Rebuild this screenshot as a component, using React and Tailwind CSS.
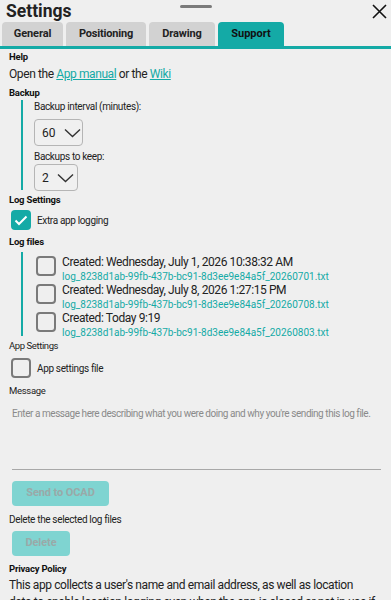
import React from "react";

function Select({ value, w }) {
  return (
    <div className={`flex items-center gap-[8px] h-[27px] ${w} border border-[#b5b5b5] rounded-[4px] pl-[7px] bg-[#f0f0f0]`}>
      <span className="text-[12px] text-[#222]">{value}</span>
      <svg width="17" height="10" viewBox="0 0 17 10" fill="none" stroke="#333" strokeWidth="1.4">
        <path d="M1 1.5 L8.5 8.5 L16 1.5" />
      </svg>
    </div>
  );
}

function Box({ checked }) {
  return checked ? (
    <div className="w-[20px] h-[20px] rounded-[4px] bg-[#14aaa6] flex items-center justify-center shrink-0">
      <svg width="14" height="11" viewBox="0 0 14 11" fill="none" stroke="white" strokeWidth="2">
        <path d="M1.5 5.5 L5 9 L12.5 1.5" />
      </svg>
    </div>
  ) : (
    <div className="w-[20px] h-[20px] rounded-[4px] border-2 border-[#7a7a7a] shrink-0" />
  );
}

function LogItem({ created, file }) {
  return (
    <div className="flex items-start gap-[6px] h-[28px]">
      <div className="pt-[1px]"><Box /></div>
      <div className="flex flex-col">
        <span className="text-[12px] leading-[15px] tracking-[-0.4px] text-[#222] whitespace-nowrap">{created}</span>
        <span className="text-[10px] leading-[13px] text-[#14aaa6] whitespace-nowrap">{file}</span>
      </div>
    </div>
  );
}

const label = "text-[9.5px] font-bold leading-[12px] tracking-[-0.2px] text-[#111]";
const small = "text-[10px] tracking-[-0.35px] text-[#222]";

export default function App() {
  return (
    <div className="w-[391px] h-[600px] overflow-hidden bg-[#efefef] text-[#1a1a1a]" style={{ fontFamily: "Roboto, 'Noto Sans', sans-serif" }}>
      <div className="relative h-[22px]">
        <div className="absolute left-[6px] top-[0px] text-[17.5px] font-bold leading-[22px] text-[#222]">Settings</div>
        <div className="absolute left-[180px] top-[5px] w-[32px] h-[3px] rounded-full bg-[#7a7a7a]" />
        <svg className="absolute right-[4px] top-[4px]" width="15" height="15" viewBox="0 0 15 15" stroke="#111" strokeWidth="1.6">
          <path d="M1 1 L14 14 M14 1 L1 14" />
        </svg>
      </div>
      <div className="flex items-end gap-[3px] pl-[2px] h-[24px] border-b-[3px] border-[#14aaa6] box-content">
        <div className="w-[61px] h-[24px] rounded-t-[4px] bg-[#d2d2d2] flex items-center justify-center text-[11px] tracking-[-0.1px] font-bold text-[#222]">General</div>
        <div className="w-[80px] h-[24px] rounded-t-[4px] bg-[#d2d2d2] flex items-center justify-center text-[11px] tracking-[-0.2px] font-bold text-[#222]">Positioning</div>
        <div className="w-[66px] h-[24px] rounded-t-[4px] bg-[#d2d2d2] flex items-center justify-center text-[11px] tracking-[-0.1px] font-bold text-[#222]">Drawing</div>
        <div className="w-[66px] h-[24px] rounded-t-[4px] bg-[#14aaa6] flex items-center justify-center text-[11px] font-bold text-[#111]">Support</div>
      </div>

      <div className="pl-[9px] pr-[8px] pt-[2px] flex flex-col">
        <div className={label}>Help</div>
        <div className="text-[12px] leading-[16px] tracking-[-0.4px] mt-[3px] text-[#222]">
          Open the <span className="text-[#14aaa6] underline">App manual</span> or the <span className="text-[#14aaa6] underline">Wiki</span>
        </div>
        <div className={`${label} mt-[5px]`}>Backup</div>
        <div className="flex mt-[1px]">
          <div className="w-[2px] bg-[#14aaa6] ml-[12px] h-[90px]" />
          <div className="ml-[11px] flex flex-col">
            <div className={`${small} leading-[13px]`}>Backup interval (minutes):</div>
            <div className="mt-[6px]"><Select value="60" w="w-[49px]" /></div>
            <div className={`${small} leading-[13px] mt-[4px]`}>Backups to keep:</div>
            <div className="mt-[1px]"><Select value="2" w="w-[44px]" /></div>
          </div>
        </div>
        <div className={`${label} mt-[3px]`}>Log Settings</div>
        <div className="flex items-center gap-[6px] mt-[4px] ml-[2px]">
          <Box checked />
          <span className={small}>Extra app logging</span>
        </div>
        <div className={`${label} mt-[6px]`}>Log files</div>
        <div className="flex mt-[4px]">
          <div className="w-[2px] bg-[#14aaa6] ml-[12px] h-[84px]" />
          <div className="ml-[13px] flex flex-col pt-[3px]">
            <LogItem created="Created: Wednesday, July 1, 2026 10:38:32 AM" file="log_8238d1ab-99fb-437b-bc91-8d3ee9e84a5f_20260701.txt" />
            <LogItem created="Created: Wednesday, July 8, 2026 1:27:15 PM" file="log_8238d1ab-99fb-437b-bc91-8d3ee9e84a5f_20260708.txt" />
            <LogItem created="Created: Today 9:19" file="log_8238d1ab-99fb-437b-bc91-8d3ee9e84a5f_20260803.txt" />
          </div>
        </div>
        <div className="text-[9.5px] leading-[12px] tracking-[-0.4px] text-[#222] mt-[1px]">App Settings</div>
        <div className="flex items-center gap-[6px] mt-[6px] ml-[2px]">
          <Box />
          <span className={small}>App settings file</span>
        </div>
        <div className="text-[9.5px] leading-[12px] tracking-[-0.3px] text-[#222] mt-[7px]">Message</div>
        <div className="ml-[3px] mr-[2px] mt-[10px] h-[63px] border-b border-[#a8a8a8] text-[10px] leading-[14px] tracking-[-0.45px] text-[#8a8a8a] whitespace-nowrap">
          Enter a message here describing what you were doing and why you're sending this log file.
        </div>
        <div className="ml-[3px] mt-[11px] w-[97px] h-[25px] rounded-[4px] bg-[#7fd4d1] flex items-center justify-center text-[11px] tracking-[-0.1px] font-bold text-[#9aa9a8]">Send to OCAD</div>
        <div className={`${small} leading-[12px] mt-[8px]`}>Delete the selected log files</div>
        <div className="ml-[3px] mt-[5px] w-[58px] h-[25px] rounded-[4px] bg-[#7fd4d1] flex items-center justify-center text-[11px] tracking-[-0.1px] font-bold text-[#9aa9a8]">Delete</div>
        <div className={`${label} mt-[7px]`}>Privacy Policy</div>
        <div className="text-[12px] leading-[17px] tracking-[-0.4px] mt-[2px] text-[#222] whitespace-nowrap">
          This app collects a user's name and email address, as well as location
          <br />
          data to enable location logging even when the app is closed or not in use if
        </div>
      </div>
    </div>
  );
}
